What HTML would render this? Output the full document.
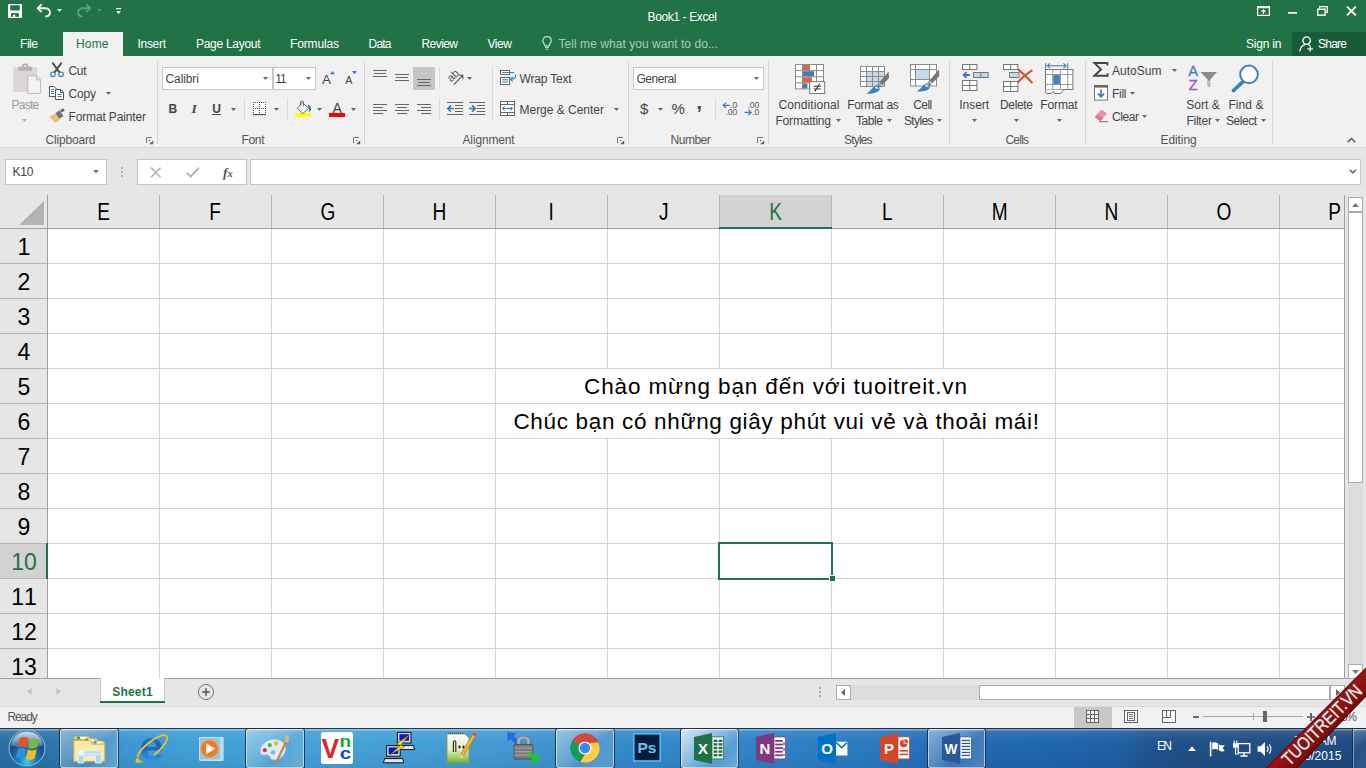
<!DOCTYPE html>
<html lang="en"><head><meta charset="utf-8"><title>Book1 - Excel</title>
<style>
*{box-sizing:border-box;margin:0;padding:0}
html,body{width:1366px;height:768px;overflow:hidden;background:#e6e6e6;font-family:"Liberation Sans",sans-serif;font-size:12px;color:#444}
body{position:relative}
.t{position:absolute;white-space:nowrap;display:block}
.a{position:absolute;display:block}
svg{position:absolute;display:block;overflow:visible}
.box{position:absolute;background:#fff;border:1px solid #c6c6c6}
.sep{position:absolute;width:1px;background:#dadada}
.gs{position:absolute;top:61px;width:1px;height:83px;background:#d4d4d4}

</style></head><body>
<div class="a" style="left:0px;top:0px;width:1366px;height:56px;background:#217346;"></div>
<span class="t" style="left:647.50px;top:9px;font-size:12px;line-height:16px;color:#fff;letter-spacing:-0.378px;">Book1 - Excel</span>
<div class="a" style="left:63px;top:32px;width:60px;height:24px;background:#f1f1f1;"></div>
<span class="t" style="left:20.00px;top:36px;font-size:12px;line-height:16px;color:#fff;letter-spacing:-0.445px;">File</span>
<span class="t" style="left:76.00px;top:36px;font-size:12px;line-height:16px;color:#217346;letter-spacing:0.163px;">Home</span>
<span class="t" style="left:137.50px;top:36px;font-size:12px;line-height:16px;color:#fff;letter-spacing:-0.302px;">Insert</span>
<span class="t" style="left:196.00px;top:36px;font-size:12px;line-height:16px;color:#fff;letter-spacing:-0.289px;">Page Layout</span>
<span class="t" style="left:290.00px;top:36px;font-size:12px;line-height:16px;color:#fff;letter-spacing:-0.144px;">Formulas</span>
<span class="t" style="left:368.50px;top:36px;font-size:12px;line-height:16px;color:#fff;letter-spacing:-0.783px;">Data</span>
<span class="t" style="left:421.50px;top:36px;font-size:12px;line-height:16px;color:#fff;letter-spacing:-0.569px;">Review</span>
<span class="t" style="left:487.50px;top:36px;font-size:12px;line-height:16px;color:#fff;letter-spacing:-0.431px;">View</span>
<span class="t" style="left:558.50px;top:36px;font-size:12px;line-height:16px;color:#a6cdb6;letter-spacing:0.049px;">Tell me what you want to do...</span>
<span class="t" style="left:1246.00px;top:36px;font-size:12px;line-height:16px;color:#fff;letter-spacing:-0.199px;">Sign in</span>
<div class="a" style="left:1292px;top:32px;width:74px;height:24px;background:#185c37;"></div>
<span class="t" style="left:1318.00px;top:36px;font-size:12px;line-height:16px;color:#fff;letter-spacing:-0.755px;">Share</span>
<svg style="left:8px;top:4px" width="14" height="14" viewBox="0 0 14 14"><rect x="0" y="0" width="14" height="14" rx="0.8" fill="#fff"/><path d="M2.2 1.3H11.8V5.6L10.8 6.6H3.2L2.2 5.6Z" fill="#217346"/><rect x="3" y="9.1" width="7.9" height="3.7" fill="#217346"/><rect x="5" y="10.7" width="2.2" height="2.2" fill="#fff"/></svg>
<svg style="left:36px;top:3px" width="16" height="15" viewBox="0 0 16 15"><path d="M5.6 1.4L1.8 5.3L5.6 9.2" fill="none" stroke="#fff" stroke-width="1.9"/><path d="M2.4 5.3H9.2C12.6 5.3 14.6 7.6 13.9 10.4C13.4 12.2 11.8 13.3 9.4 13.6" fill="none" stroke="#fff" stroke-width="1.9"/></svg>
<svg style="left:57px;top:9px" width="5" height="3" viewBox="0 0 5 3"><path d="M0 0H5L2.5 3Z" fill="#fff"/></svg>
<svg style="left:76px;top:3px" width="16" height="15" viewBox="0 0 16 15"><g transform="translate(16,0) scale(-1,1)"><path d="M5.6 1.4L1.8 5.3L5.6 9.2" fill="none" stroke="#5f9f7c" stroke-width="1.9"/><path d="M2.4 5.3H9.2C12.6 5.3 14.6 7.6 13.9 10.4C13.4 12.2 11.8 13.3 9.4 13.6" fill="none" stroke="#5f9f7c" stroke-width="1.9"/></g></svg>
<svg style="left:97px;top:9px" width="5" height="3" viewBox="0 0 5 3"><path d="M0 0H5L2.5 3Z" fill="#4f9470"/></svg>
<svg style="left:116px;top:8px" width="5" height="6" viewBox="0 0 5 6"><rect x="0" y="0" width="5" height="1.3" fill="#fff"/><path d="M0 3H5L2.5 6Z" fill="#fff"/></svg>
<svg style="left:1257px;top:6px" width="13" height="10" viewBox="0 0 13 10"><rect x="0.6" y="0.6" width="11.8" height="8.8" fill="none" stroke="#fff" stroke-width="1.2"/><rect x="0.6" y="0.6" width="11.8" height="1.6" fill="#fff"/><path d="M6.5 8V4M4.5 5.8L6.5 3.8L8.5 5.8" fill="none" stroke="#fff" stroke-width="1.1"/></svg>
<svg style="left:1288px;top:12px" width="9" height="2" viewBox="0 0 9 2"><rect x="0" y="0" width="9" height="1.7" fill="#fff"/></svg>
<svg style="left:1317px;top:6px" width="11" height="10" viewBox="0 0 11 10"><path d="M2.6 2.6V0.7H10.3V6.4H8.2" fill="none" stroke="#fff" stroke-width="1.3"/><rect x="0.7" y="3.2" width="7.4" height="6" fill="none" stroke="#fff" stroke-width="1.4"/></svg>
<svg style="left:1346px;top:6px" width="11" height="10" viewBox="0 0 11 10"><path d="M1 0.6L9.8 9.4M9.8 0.6L1 9.4" fill="none" stroke="#fff" stroke-width="2"/></svg>
<svg style="left:1299px;top:36px" width="16" height="16" viewBox="0 0 16 16"><circle cx="7.6" cy="4.6" r="3.7" fill="none" stroke="#fff" stroke-width="1.3"/><path d="M0.8 15.5C1.3 11.6 3.6 9.3 6 8.6M9.3 8.6C10 8.8 10.6 9.2 11.2 9.7" fill="none" stroke="#fff" stroke-width="1.3"/><path d="M11.2 10.2V15.6M8.5 12.9H13.9" fill="none" stroke="#fff" stroke-width="1.3"/></svg>
<svg style="left:541.5px;top:36px" width="10" height="14" viewBox="0 0 10 14"><path d="M5 0.7C2.4 0.7 0.8 2.6 0.8 4.7C0.8 6.8 2.7 7.6 3 9.8H7C7.3 7.6 9.2 6.8 9.2 4.7C9.2 2.6 7.6 0.7 5 0.7Z" fill="none" stroke="#c4ddd0" stroke-width="1.2"/><path d="M3.2 11.4H6.8M3.8 13.2H6.2" stroke="#c4ddd0" stroke-width="1.1" fill="none"/></svg>
<div class="a" style="left:0px;top:56px;width:1366px;height:91px;background:#f1f1f1;"></div>
<div class="a" style="left:0px;top:147px;width:1366px;height:1px;background:#d6d6d6;"></div>
<div class="gs" style="left:157px"></div>
<div class="gs" style="left:364px"></div>
<div class="gs" style="left:628px"></div>
<div class="gs" style="left:768px"></div>
<div class="gs" style="left:949px"></div>
<div class="gs" style="left:1085px"></div>
<div class="gs" style="left:1272px"></div>
<span class="t" style="left:11.60px;top:97px;font-size:12px;line-height:16px;color:#9c9c9c;letter-spacing:-0.771px;">Paste</span>
<svg style="left:22px;top:119px" width="5" height="3" viewBox="0 0 5 3"><path d="M0 0H5L2.5 3Z" fill="#b0b0b0"/></svg>
<span class="t" style="left:68.50px;top:63px;font-size:12px;line-height:16px;color:#444;letter-spacing:-0.337px;">Cut</span>
<span class="t" style="left:68.50px;top:86px;font-size:12px;line-height:16px;color:#444;letter-spacing:-0.171px;">Copy</span>
<svg style="left:106px;top:92px" width="5" height="3" viewBox="0 0 5 3"><path d="M0 0H5L2.5 3Z" fill="#666"/></svg>
<span class="t" style="left:68.50px;top:109px;font-size:12px;line-height:16px;color:#444;letter-spacing:-0.143px;">Format Painter</span>
<span class="t" style="left:45.50px;top:132px;font-size:12px;line-height:16px;color:#555;letter-spacing:-0.170px;">Clipboard</span>
<svg style="left:146px;top:137px" width="8" height="8" viewBox="0 0 8 8"><path d="M0.5 6V0.5H6" fill="none" stroke="#777" stroke-width="1"/><path d="M7.2 3.2V7.2H3.2Z" fill="#666"/><rect x="3" y="3" width="1.2" height="1.2" fill="#666"/></svg>
<div class="box" style="left:162px;top:67px;width:111px;height:23px"></div>
<div class="box" style="left:273px;top:67px;width:43px;height:23px"></div>
<span class="t" style="left:165.50px;top:71px;font-size:12px;line-height:16px;color:#444;letter-spacing:-0.101px;">Calibri</span>
<span class="t" style="left:275.20px;top:71px;font-size:12px;line-height:16px;color:#444;letter-spacing:-0.957px;">11</span>
<svg style="left:263px;top:77px" width="5" height="3" viewBox="0 0 5 3"><path d="M0 0H5L2.5 3Z" fill="#666"/></svg>
<svg style="left:306px;top:77px" width="5" height="3" viewBox="0 0 5 3"><path d="M0 0H5L2.5 3Z" fill="#666"/></svg>
<span class="t" style="left:168.60px;top:101px;font-size:12px;line-height:16px;color:#444;font-weight:bold;">B</span>
<span class="t" style="left:191.50px;top:100px;font-size:13.5px;line-height:18px;color:#444;font-weight:bold;font-style:italic;font-family:'Liberation Serif',serif;">I</span>
<span class="t" style="left:212.30px;top:101px;font-size:12px;line-height:16px;color:#444;font-weight:bold;">U</span>
<div class="a" style="left:212px;top:114px;width:9px;height:1px;background:#444;"></div>
<svg style="left:231px;top:108px" width="5" height="3" viewBox="0 0 5 3"><path d="M0 0H5L2.5 3Z" fill="#666"/></svg>
<div class="a" style="left:244px;top:98px;width:1px;height:22px;background:#dadada;"></div>
<svg style="left:274px;top:108px" width="5" height="3" viewBox="0 0 5 3"><path d="M0 0H5L2.5 3Z" fill="#666"/></svg>
<div class="a" style="left:287px;top:98px;width:1px;height:22px;background:#dadada;"></div>
<svg style="left:317px;top:108px" width="5" height="3" viewBox="0 0 5 3"><path d="M0 0H5L2.5 3Z" fill="#666"/></svg>
<svg style="left:351px;top:108px" width="5" height="3" viewBox="0 0 5 3"><path d="M0 0H5L2.5 3Z" fill="#666"/></svg>
<span class="t" style="left:241.40px;top:132px;font-size:12px;line-height:16px;color:#555;letter-spacing:-0.271px;">Font</span>
<svg style="left:353px;top:137px" width="8" height="8" viewBox="0 0 8 8"><path d="M0.5 6V0.5H6" fill="none" stroke="#777" stroke-width="1"/><path d="M7.2 3.2V7.2H3.2Z" fill="#666"/><rect x="3" y="3" width="1.2" height="1.2" fill="#666"/></svg>
<div class="a" style="left:413px;top:67px;width:22px;height:23px;background:#c6c6c6;"></div>
<div class="a" style="left:439px;top:67px;width:1px;height:22px;background:#dadada;"></div>
<div class="a" style="left:439px;top:98px;width:1px;height:22px;background:#dadada;"></div>
<div class="a" style="left:492px;top:66px;width:1px;height:55px;background:#dadada;"></div>
<svg style="left:467px;top:77px" width="5" height="3" viewBox="0 0 5 3"><path d="M0 0H5L2.5 3Z" fill="#666"/></svg>
<span class="t" style="left:519.50px;top:71px;font-size:12px;line-height:16px;color:#444;letter-spacing:-0.172px;">Wrap Text</span>
<span class="t" style="left:519.50px;top:102px;font-size:12px;line-height:16px;color:#444;letter-spacing:-0.016px;">Merge &amp; Center</span>
<svg style="left:614px;top:108px" width="5" height="3" viewBox="0 0 5 3"><path d="M0 0H5L2.5 3Z" fill="#666"/></svg>
<span class="t" style="left:462.50px;top:132px;font-size:12px;line-height:16px;color:#555;letter-spacing:-0.145px;">Alignment</span>
<svg style="left:617px;top:137px" width="8" height="8" viewBox="0 0 8 8"><path d="M0.5 6V0.5H6" fill="none" stroke="#777" stroke-width="1"/><path d="M7.2 3.2V7.2H3.2Z" fill="#666"/><rect x="3" y="3" width="1.2" height="1.2" fill="#666"/></svg>
<div class="box" style="left:633px;top:67px;width:131px;height:23px"></div>
<span class="t" style="left:636.40px;top:71px;font-size:12px;line-height:16px;color:#444;letter-spacing:-0.449px;">General</span>
<svg style="left:754px;top:77px" width="5" height="3" viewBox="0 0 5 3"><path d="M0 0H5L2.5 3Z" fill="#666"/></svg>
<span class="t" style="left:640.00px;top:99px;font-size:15px;line-height:20px;color:#444;">$</span>
<svg style="left:658px;top:108px" width="5" height="3" viewBox="0 0 5 3"><path d="M0 0H5L2.5 3Z" fill="#666"/></svg>
<span class="t" style="left:671.50px;top:99px;font-size:15px;line-height:20px;color:#444;">%</span>
<span class="t" style="left:696.50px;top:89px;font-size:20px;line-height:27px;color:#444;font-weight:bold;">,</span>
<div class="a" style="left:715px;top:98px;width:1px;height:22px;background:#dadada;"></div>
<span class="t" style="left:670.50px;top:132px;font-size:12px;line-height:16px;color:#555;letter-spacing:-0.476px;">Number</span>
<svg style="left:757px;top:137px" width="8" height="8" viewBox="0 0 8 8"><path d="M0.5 6V0.5H6" fill="none" stroke="#777" stroke-width="1"/><path d="M7.2 3.2V7.2H3.2Z" fill="#666"/><rect x="3" y="3" width="1.2" height="1.2" fill="#666"/></svg>
<span class="t" style="left:778.50px;top:97px;font-size:12px;line-height:16px;color:#444;letter-spacing:0.096px;">Conditional</span>
<span class="t" style="left:775.50px;top:113px;font-size:12px;line-height:16px;color:#444;letter-spacing:-0.206px;">Formatting</span>
<svg style="left:836px;top:119px" width="5" height="3" viewBox="0 0 5 3"><path d="M0 0H5L2.5 3Z" fill="#666"/></svg>
<span class="t" style="left:847.15px;top:97px;font-size:12px;line-height:16px;color:#444;letter-spacing:-0.289px;">Format as</span>
<span class="t" style="left:856.00px;top:113px;font-size:12px;line-height:16px;color:#444;letter-spacing:-0.422px;">Table</span>
<svg style="left:887px;top:119px" width="5" height="3" viewBox="0 0 5 3"><path d="M0 0H5L2.5 3Z" fill="#666"/></svg>
<span class="t" style="left:913.20px;top:97px;font-size:12px;line-height:16px;color:#444;letter-spacing:-0.557px;">Cell</span>
<span class="t" style="left:904.00px;top:113px;font-size:12px;line-height:16px;color:#444;letter-spacing:-0.636px;">Styles</span>
<svg style="left:936.5px;top:119px" width="5" height="3" viewBox="0 0 5 3"><path d="M0 0H5L2.5 3Z" fill="#666"/></svg>
<span class="t" style="left:844.00px;top:132px;font-size:12px;line-height:16px;color:#555;letter-spacing:-0.816px;">Styles</span>
<span class="t" style="left:959.35px;top:97px;font-size:12px;line-height:16px;color:#444;letter-spacing:-0.062px;">Insert</span>
<svg style="left:971.5px;top:119px" width="5" height="3" viewBox="0 0 5 3"><path d="M0 0H5L2.5 3Z" fill="#666"/></svg>
<span class="t" style="left:1000.00px;top:97px;font-size:12px;line-height:16px;color:#444;letter-spacing:-0.338px;">Delete</span>
<svg style="left:1014px;top:119px" width="5" height="3" viewBox="0 0 5 3"><path d="M0 0H5L2.5 3Z" fill="#666"/></svg>
<span class="t" style="left:1040.30px;top:97px;font-size:12px;line-height:16px;color:#444;letter-spacing:-0.121px;">Format</span>
<svg style="left:1056.5px;top:119px" width="5" height="3" viewBox="0 0 5 3"><path d="M0 0H5L2.5 3Z" fill="#666"/></svg>
<span class="t" style="left:1005.50px;top:132px;font-size:12px;line-height:16px;color:#555;letter-spacing:-0.793px;">Cells</span>
<span class="t" style="left:1112.00px;top:63px;font-size:12px;line-height:16px;color:#444;letter-spacing:0.007px;">AutoSum</span>
<svg style="left:1171.5px;top:69px" width="5" height="3" viewBox="0 0 5 3"><path d="M0 0H5L2.5 3Z" fill="#666"/></svg>
<span class="t" style="left:1112.00px;top:86px;font-size:12px;line-height:16px;color:#444;letter-spacing:-0.276px;">Fill</span>
<svg style="left:1130px;top:92px" width="5" height="3" viewBox="0 0 5 3"><path d="M0 0H5L2.5 3Z" fill="#666"/></svg>
<span class="t" style="left:1112.00px;top:109px;font-size:12px;line-height:16px;color:#444;letter-spacing:-0.419px;">Clear</span>
<svg style="left:1141.5px;top:115px" width="5" height="3" viewBox="0 0 5 3"><path d="M0 0H5L2.5 3Z" fill="#666"/></svg>
<span class="t" style="left:1186.35px;top:97px;font-size:12px;line-height:16px;color:#444;letter-spacing:-0.009px;">Sort &amp;</span>
<span class="t" style="left:1186.40px;top:113px;font-size:12px;line-height:16px;color:#444;letter-spacing:-0.233px;">Filter</span>
<svg style="left:1215px;top:119px" width="5" height="3" viewBox="0 0 5 3"><path d="M0 0H5L2.5 3Z" fill="#666"/></svg>
<span class="t" style="left:1228.40px;top:97px;font-size:12px;line-height:16px;color:#444;letter-spacing:0.104px;">Find &amp;</span>
<span class="t" style="left:1226.00px;top:113px;font-size:12px;line-height:16px;color:#444;letter-spacing:-0.470px;">Select</span>
<svg style="left:1260.5px;top:119px" width="5" height="3" viewBox="0 0 5 3"><path d="M0 0H5L2.5 3Z" fill="#666"/></svg>
<span class="t" style="left:1160.50px;top:132px;font-size:12px;line-height:16px;color:#555;letter-spacing:-0.082px;">Editing</span>
<svg style="left:1347px;top:137px" width="9" height="6" viewBox="0 0 9 6"><path d="M0.7 5.2L4.5 1.4L8.3 5.2" fill="none" stroke="#555" stroke-width="1.4"/></svg>
<svg style="left:12px;top:63px" width="30" height="32" viewBox="0 0 30 32"><rect x="1.2" y="4.2" width="23.8" height="24.6" rx="1" fill="#d9d5d9"/><rect x="6.3" y="3.6" width="13.6" height="4.2" fill="#b3b0b3"/><path d="M10 3.8V2.4C10 1.2 11 0.6 13.1 0.6C15.2 0.6 16.2 1.2 16.2 2.4V3.8Z" fill="#b3b0b3"/><circle cx="13.1" cy="2.9" r="1" fill="#f1f1f1"/><path d="M15.8 12.8H24.6L28.6 16.8V30.4H15.8Z" fill="#f5f1f7" stroke="#bdb9bd" stroke-width="1"/><path d="M24.6 12.8V16.8H28.6" fill="none" stroke="#bdb9bd" stroke-width="1"/></svg>
<svg style="left:49px;top:62px" width="16" height="16" viewBox="0 0 16 16"><path d="M3.4 0.6L10.6 10.6M12.6 0.6L5.4 10.6" stroke="#505050" stroke-width="1.9" fill="none"/><circle cx="3.9" cy="12.3" r="2.3" fill="none" stroke="#3e7cc0" stroke-width="1.1"/><circle cx="12.1" cy="12.3" r="2.3" fill="none" stroke="#3e7cc0" stroke-width="1.1"/></svg>
<svg style="left:49px;top:86px" width="16" height="15" viewBox="0 0 16 15"><path d="M0.5 0.5H5L7.5 3V10.5H0.5Z" fill="#fff" stroke="#555" stroke-width="1"/><path d="M2 3.5H5M2 5.5H5M2 7.5H5" stroke="#3e7cc0" stroke-width="1"/><path d="M6.5 3.5H11.5L14.5 6.5V13.5H6.5Z" fill="#fff" stroke="#555" stroke-width="1"/><path d="M11.5 3.5V6.5H14.5" fill="none" stroke="#555" stroke-width="1"/><path d="M8.5 8.5H12.5M8.5 10.5H12.5" stroke="#3e7cc0" stroke-width="1"/></svg>
<svg style="left:49px;top:108px" width="17" height="16" viewBox="0 0 17 16"><path d="M0.2 8.6L6.6 5.6L11.4 11.2L6.4 15Z" fill="#e9bf78"/><path d="M6.4 5.2L10.4 2.2L14.6 8L10.6 10.8Z" fill="#747474"/><path d="M11 2.2L14.2 0.2L15.8 2.4L12.8 4.6Z" fill="#666"/></svg>
<span class="t" style="left:322px;top:72.3px;font-size:13.4px;line-height:15px;color:#444">A</span>
<svg style="left:330px;top:70.6px" width="5" height="3.2" viewBox="0 0 5 3.2"><path d="M0 3.2H5L2.5 0Z" fill="#3b78bd"/></svg>
<span class="t" style="left:345.2px;top:73.8px;font-size:10.8px;line-height:12px;color:#444">A</span>
<svg style="left:352px;top:70.8px" width="5" height="3.2" viewBox="0 0 5 3.2"><path d="M0 0H5L2.5 3.2Z" fill="#3b78bd"/></svg>
<svg style="left:253px;top:102px" width="13" height="13" viewBox="0 0 13 13"><rect x="0" y="0" width="13" height="12" fill="#fff"/><rect x="0" y="0" width="1" height="1" fill="#555"/><rect x="0" y="6" width="1" height="1" fill="#555"/><rect x="2" y="0" width="1" height="1" fill="#555"/><rect x="2" y="6" width="1" height="1" fill="#555"/><rect x="4" y="0" width="1" height="1" fill="#555"/><rect x="4" y="6" width="1" height="1" fill="#555"/><rect x="6" y="0" width="1" height="1" fill="#555"/><rect x="6" y="6" width="1" height="1" fill="#555"/><rect x="8" y="0" width="1" height="1" fill="#555"/><rect x="8" y="6" width="1" height="1" fill="#555"/><rect x="10" y="0" width="1" height="1" fill="#555"/><rect x="10" y="6" width="1" height="1" fill="#555"/><rect x="12" y="0" width="1" height="1" fill="#555"/><rect x="12" y="6" width="1" height="1" fill="#555"/><rect x="0" y="2" width="1" height="1" fill="#555"/><rect x="0" y="4" width="1" height="1" fill="#555"/><rect x="0" y="8" width="1" height="1" fill="#555"/><rect x="0" y="10" width="1" height="1" fill="#555"/><rect x="6" y="2" width="1" height="1" fill="#555"/><rect x="6" y="4" width="1" height="1" fill="#555"/><rect x="6" y="8" width="1" height="1" fill="#555"/><rect x="6" y="10" width="1" height="1" fill="#555"/><rect x="12" y="2" width="1" height="1" fill="#555"/><rect x="12" y="4" width="1" height="1" fill="#555"/><rect x="12" y="8" width="1" height="1" fill="#555"/><rect x="12" y="10" width="1" height="1" fill="#555"/><rect x="0" y="12" width="13" height="1.2" fill="#555"/></svg>
<div class="a" style="left:295px;top:113px;width:16px;height:4px;background:#ffff00;"></div>
<svg style="left:295px;top:100px" width="17" height="14" viewBox="0 0 17 14"><path d="M7.7 2.6L13.6 8.4L7.7 13.6L2.2 8.4Z" fill="#fff" stroke="#666" stroke-width="1"/><path d="M5.6 5.6V1.9C5.6 0.6 8.4 0.6 8.4 1.9V6.4" fill="none" stroke="#666" stroke-width="1"/><path d="M12.4 4.6C15 5.4 16.4 7.4 16 9.6C15.8 10.8 15 11.8 13.6 12C14.2 10.8 14.4 9.2 14 8.2Z" fill="#2e6db5"/></svg>
<span class="t" style="left:332.4px;top:99.6px;font-size:14.2px;line-height:16px;color:#444">A</span>
<div class="a" style="left:329px;top:113px;width:16px;height:4px;background:#f00;"></div>
<svg style="left:0;top:0" width="500" height="130" viewBox="0 0 500 130"><rect x="373" y="70" width="14" height="1" fill="#666"/><rect x="374" y="73" width="12" height="1" fill="#666"/><rect x="373" y="76" width="14" height="1" fill="#666"/><rect x="395" y="74" width="14" height="1" fill="#666"/><rect x="396" y="77" width="12" height="1" fill="#666"/><rect x="395" y="80" width="14" height="1" fill="#666"/><rect x="417" y="79" width="14" height="1" fill="#666"/><rect x="418" y="82" width="12" height="1" fill="#666"/><rect x="417" y="85" width="14" height="1" fill="#666"/><rect x="373" y="104" width="14" height="1" fill="#666"/><rect x="395" y="104" width="14" height="1" fill="#666"/><rect x="417" y="104" width="14" height="1" fill="#666"/><rect x="373" y="107" width="10" height="1" fill="#666"/><rect x="397" y="107" width="10" height="1" fill="#666"/><rect x="421" y="107" width="10" height="1" fill="#666"/><rect x="373" y="110" width="14" height="1" fill="#666"/><rect x="395" y="110" width="14" height="1" fill="#666"/><rect x="417" y="110" width="14" height="1" fill="#666"/><rect x="373" y="113" width="10" height="1" fill="#666"/><rect x="397" y="113" width="10" height="1" fill="#666"/><rect x="421" y="113" width="10" height="1" fill="#666"/><rect x="447" y="102" width="16" height="1" fill="#666"/><rect x="447" y="114" width="16" height="1" fill="#666"/><rect x="455" y="105" width="8" height="1" fill="#666"/><rect x="455" y="108" width="8" height="1" fill="#666"/><rect x="455" y="111" width="8" height="1" fill="#666"/><rect x="469" y="102" width="16" height="1" fill="#666"/><rect x="469" y="114" width="16" height="1" fill="#666"/><rect x="477" y="105" width="8" height="1" fill="#666"/><rect x="477" y="108" width="8" height="1" fill="#666"/><rect x="477" y="111" width="8" height="1" fill="#666"/><path d="M454 108.5H448.4M451 105.4L447.8 108.5L451 111.6" fill="none" stroke="#3b78bd" stroke-width="1.7"/><path d="M469 108.5H474.6M472 105.4L475.2 108.5L472 111.6" fill="none" stroke="#3b78bd" stroke-width="1.7"/></svg>
<svg style="left:446px;top:68px" width="18" height="18" viewBox="0 0 18 18"><text x="0" y="0" transform="translate(5.2,14.6) rotate(-45)" font-size="11" fill="#555" font-family="Liberation Sans, sans-serif">ab</text><path d="M7.8 16.6L16.4 7.6M12.8 7.2H16.8V11.2" fill="none" stroke="#555" stroke-width="1.1"/></svg>
<svg style="left:500px;top:70px" width="17" height="15" viewBox="0 0 17 15"><rect x="0.5" y="0.5" width="9" height="4" fill="#fff" stroke="#666"/><rect x="0.5" y="7.5" width="9" height="7" fill="#fff" stroke="#666"/><path d="M2 2.5H14" stroke="#3b78bd" stroke-width="1"/><path d="M2.2 9.8H8M2.2 12H8" stroke="#3b78bd" stroke-width="1"/><path d="M15.6 4.6C16 7.6 14.2 9.2 10.8 9.3M12.8 7L10.4 9.3L12.8 11.6" fill="none" stroke="#3b78bd" stroke-width="1.1"/></svg>
<svg style="left:500px;top:101px" width="15" height="15" viewBox="0 0 15 15"><rect x="0.5" y="0.5" width="14" height="14" fill="#fff" stroke="#666"/><path d="M0.5 3.5H14.5M0.5 11.5H14.5M7.5 0.5V3.5M7.5 11.5V14.5" stroke="#666" fill="none"/><path d="M2.6 7.5H12.4M4.4 5.7L2.4 7.5L4.4 9.3M10.6 5.7L12.6 7.5L10.6 9.3" fill="none" stroke="#3b78bd" stroke-width="1"/></svg>
<svg style="left:722px;top:101px" width="16" height="15" viewBox="0 0 16 15"><text x="8" y="7.2" font-family="Liberation Sans, sans-serif" font-size="8.6" fill="#555">.0</text><text x="3.4" y="14.2" font-family="Liberation Sans, sans-serif" font-size="8.6" fill="#555">.00</text><path d="M7.6 4.4H1.6M4 1.8L1.2 4.4L4 7" fill="none" stroke="#3b78bd" stroke-width="1.2"/></svg>
<svg style="left:744px;top:101px" width="16" height="15" viewBox="0 0 16 15"><text x="3.4" y="7.2" font-family="Liberation Sans, sans-serif" font-size="8.6" fill="#555">.00</text><text x="8" y="14.2" font-family="Liberation Sans, sans-serif" font-size="8.6" fill="#555">.0</text><path d="M0.6 11.4H6.8M4.4 8.8L7.2 11.4L4.4 14" fill="none" stroke="#3b78bd" stroke-width="1.2"/></svg>
<svg style="left:795px;top:64px" width="31" height="31" viewBox="0 0 31 31"><rect x="0.5" y="0.5" width="28" height="24.5" fill="#fff"/><path d="M0.5 0.5V25" stroke="#8a8a8a"/><path d="M7.5 0.5V25" stroke="#8a8a8a"/><path d="M14.5 0.5V25" stroke="#8a8a8a"/><path d="M21.5 0.5V25" stroke="#8a8a8a"/><path d="M28.5 0.5V25" stroke="#8a8a8a"/><path d="M0.5 0.5H28.5" stroke="#8a8a8a"/><path d="M0.5 6.6H28.5" stroke="#8a8a8a"/><path d="M0.5 12.7H28.5" stroke="#8a8a8a"/><path d="M0.5 18.799999999999997H28.5" stroke="#8a8a8a"/><path d="M0.5 24.9H28.5" stroke="#8a8a8a"/><rect x="8" y="1" width="6" height="5" fill="#e0603c"/><rect x="8" y="7.2" width="11" height="5" fill="#3d7ebf"/><rect x="8" y="13.3" width="9" height="5" fill="#e0603c"/><rect x="8" y="19.4" width="4.4" height="5" fill="#3d7ebf"/><rect x="14.7" y="17.7" width="15" height="11.8" fill="#fff" stroke="#777"/><path d="M18.6 22.2H25.8M18.6 25H25.8M24.6 19.8L19.8 27.4" stroke="#333" stroke-width="1.1" fill="none"/></svg>
<svg style="left:860px;top:66px" width="32" height="30" viewBox="0 0 32 30"><rect x="0.5" y="0.5" width="24" height="20" fill="#fff"/><rect x="6.5" y="5.5" width="18" height="15" fill="#c5d9ee"/><path d="M0.5 0.5V20.5" stroke="#8a8a8a"/><path d="M6.5 0.5V20.5" stroke="#8a8a8a"/><path d="M12.5 0.5V20.5" stroke="#8a8a8a"/><path d="M18.5 0.5V20.5" stroke="#8a8a8a"/><path d="M24.5 0.5V20.5" stroke="#8a8a8a"/><path d="M0.5 0.5H24.5" stroke="#8a8a8a"/><path d="M0.5 5.5H24.5" stroke="#8a8a8a"/><path d="M0.5 10.5H24.5" stroke="#8a8a8a"/><path d="M0.5 15.5H24.5" stroke="#8a8a8a"/><path d="M0.5 20.5H24.5" stroke="#8a8a8a"/><path d="M28.6 5.6L29 12L22.2 19.2L19.2 16.4Z" fill="#777"/><path d="M18.6 17.2L21.6 20L20.2 21.4L17.2 18.6Z" fill="#8a8a8a"/><path d="M6.4 27.8C11 25 12.4 20.6 16.6 19.2C19 19.6 20.2 21.6 19.6 23.6C18.6 26.4 13.6 28 6.4 27.8Z" fill="#3d7ebf"/><path d="M15.6 20.6C17.2 20.6 18.4 21.6 18.4 23.2C17.4 22.4 16.2 22 14.8 22.2Z" fill="#fff"/></svg>
<svg style="left:910px;top:64px" width="32" height="30" viewBox="0 0 32 30"><rect x="0.5" y="0.5" width="26" height="21.5" fill="#fff" stroke="#8a8a8a"/><path d="M5.5 0.5V22M19.5 0.5V22M0.5 5.5H26.5M0.5 15.5H26.5" stroke="#8a8a8a" fill="none"/><rect x="6" y="6" width="13" height="9" fill="#c5d9ee"/><path d="M29 5.6L29.2 12L22.4 19.2L19.4 16.4Z" fill="#777"/><path d="M18.8 17.2L21.8 20L20.4 21.4L17.4 18.6Z" fill="#8a8a8a"/><path d="M6.6 27.6C11.2 24.8 12.6 20.6 16.8 19.2C19.2 19.6 20.4 21.6 19.8 23.6C18.8 26.4 13.8 27.8 6.6 27.6Z" fill="#3d7ebf"/><path d="M15.8 20.6C17.4 20.6 18.6 21.6 18.6 23.2C17.6 22.4 16.4 22 15 22.2Z" fill="#fff"/></svg>
<svg style="left:962px;top:64px" width="27" height="28" viewBox="0 0 27 28"><rect x="0.5" y="0.5" width="14.4" height="5" fill="#fff" stroke="#777"/><path d="M7.7 0.5V5.5" stroke="#777"/><rect x="11.5" y="8.5" width="14.6" height="5" fill="#c5d9ee" stroke="#777"/><path d="M18.8 8.5V13.5" stroke="#777"/><rect x="0.5" y="16.5" width="14.4" height="10" fill="#fff" stroke="#777"/><path d="M7.7 16.5V26.5M0.5 21.5H14.9" stroke="#777"/><path d="M8 11H2M4.6 8.2L1.6 11L4.6 13.8" fill="none" stroke="#3b78bd" stroke-width="1.8"/></svg>
<svg style="left:1003px;top:64px" width="31" height="29" viewBox="0 0 31 29"><rect x="0.5" y="0.5" width="14.4" height="5" fill="#fff" stroke="#777"/><path d="M7.7 0.5V5.5" stroke="#777"/><rect x="6.5" y="8.5" width="9.5" height="5" fill="#c5d9ee" stroke="#777"/><rect x="0.5" y="17.5" width="14.4" height="10" fill="#fff" stroke="#777"/><path d="M7.7 17.5V27.5M0.5 22.5H14.9" stroke="#777"/><path d="M15.6 5.8C20 9.6 24.6 13.6 28.8 18.4M28.6 6.6C23.6 9.8 19 13.8 15.2 17.8" fill="none" stroke="#d9532c" stroke-width="2.2" stroke-linecap="round"/></svg>
<svg style="left:1045px;top:62px" width="29" height="33" viewBox="0 0 29 33"><path d="M0.6 1.2V6.4M22.8 1.2V6.4M2.6 3.8H20.8M5 1.4L2.4 3.8L5 6.2M18.4 1.4L21 3.8L18.4 6.2" fill="none" stroke="#3b78bd" stroke-width="1.1"/><rect x="0.5" y="7.5" width="27.4" height="20" fill="#fff" stroke="#777"/><path d="M7.7 7.5V27.5M15.4 7.5V27.5M22.7 7.5V27.5M0.5 12.5H27.9M0.5 22.5H27.9" stroke="#999" fill="none"/><rect x="8.2" y="13" width="6.8" height="9" fill="#4a80bd"/><path d="M0.5 27.5V30.2C0.5 31 1 31.5 1.8 31.5H6.6L8.4 29.4L9.4 31.5H15.8L18.6 27.8" fill="#fff" stroke="#777"/></svg>
<svg style="left:1093px;top:62px" width="16" height="15" viewBox="0 0 16 15"><path d="M14.4 3.4V1H1.4L8 7.4L1.4 13.8H14.6V11.2" fill="none" stroke="#444" stroke-width="1.9" stroke-linejoin="miter"/></svg>
<svg style="left:1094px;top:85px" width="14" height="16" viewBox="0 0 14 16"><rect x="0.5" y="0.5" width="13" height="14.6" fill="#fff" stroke="#777"/><rect x="0" y="0" width="14" height="2.6" fill="#666"/><path d="M7 4.6V11.6M3.8 8.6L7 11.8L10.2 8.6" fill="none" stroke="#3b78bd" stroke-width="1.7"/></svg>
<svg style="left:1094px;top:109px" width="15" height="14" viewBox="0 0 15 14"><path d="M7.6 0.4L13 4.6L6.4 12.2L0.8 8Z" fill="#ee8fa3"/><path d="M0.8 8L3.2 5.2L8.8 9.4L6.4 12.2Z" fill="#e8738c"/><path d="M5 12.7H14" stroke="#777" stroke-width="1"/></svg>
<svg style="left:1187px;top:64px" width="32" height="28" viewBox="0 0 32 28"><text x="1.2" y="12.4" font-family="Liberation Sans, sans-serif" font-size="14.6" fill="#3b7fc4" stroke="#3b7fc4" stroke-width=".3">A</text><text x="1.8" y="26.4" font-family="Liberation Sans, sans-serif" font-size="14.6" fill="#a04fc0" stroke="#a04fc0" stroke-width=".3">Z</text><path d="M13.6 8H30L23.2 15.6V22.6H20.6V15.6Z" fill="#8a8a8a"/><path d="M21.4 16.4H22.4V21.8H21.4Z" fill="#f1f1f1"/></svg>
<svg style="left:1230px;top:62px" width="32" height="32" viewBox="0 0 32 32"><path d="M13 19.6L3.4 28.6" stroke="#3b7fc4" stroke-width="3.6" stroke-linecap="round"/><circle cx="19" cy="12.4" r="8.8" fill="#fff" stroke="#3b7fc4" stroke-width="2"/></svg>
<div class="box" style="left:5px;top:159px;width:102px;height:26px"></div>
<span class="t" style="left:12.50px;top:164px;font-size:12px;line-height:16px;color:#444;letter-spacing:-0.176px;">K10</span>
<svg style="left:93px;top:169.5px" width="6" height="3.5" viewBox="0 0 6 3.5"><path d="M0 0H6L3.0 3.5Z" fill="#777"/></svg>
<div class="a" style="left:121px;top:167px;width:2px;height:2px;background:#b4b4b4;"></div>
<div class="a" style="left:121px;top:171px;width:2px;height:2px;background:#b4b4b4;"></div>
<div class="a" style="left:121px;top:175px;width:2px;height:2px;background:#b4b4b4;"></div>
<div class="box" style="left:137px;top:159px;width:110px;height:26px"></div>
<div class="box" style="left:250px;top:159px;width:1111px;height:26px"></div>
<svg style="left:150px;top:167px" width="12" height="11" viewBox="0 0 12 11"><path d="M1 0.6L10.6 10.2M10.6 0.6L1 10.2" stroke="#b4b4b4" stroke-width="1.5" fill="none"/></svg>
<svg style="left:186px;top:167px" width="14" height="11" viewBox="0 0 14 11"><path d="M0.8 5.8L4.6 9.6L12.8 0.8" stroke="#b4b4b4" stroke-width="2" fill="none"/></svg>
<span class="t" style="left:223.00px;top:164px;font-size:13.5px;line-height:18px;color:#555;font-weight:bold;font-style:italic;font-family:'Liberation Serif',serif;">f</span>
<span class="t" style="left:227.60px;top:167px;font-size:10.5px;line-height:14px;color:#555;font-weight:bold;font-style:italic;font-family:'Liberation Serif',serif;">x</span>
<svg style="left:1349px;top:169px" width="8" height="6" viewBox="0 0 8 6"><path d="M0.8 0.8L3.9 3.9L7 0.8" stroke="#666" stroke-width="1.6" fill="none"/></svg>
<div class="a" style="left:0px;top:195px;width:1345px;height:483px;background:#fff;"></div>
<div class="a" style="left:0px;top:195px;width:1345px;height:33px;background:#e6e6e6;"></div>
<div class="a" style="left:0px;top:195px;width:47px;height:483px;background:#e6e6e6;"></div>
<div class="a" style="left:719px;top:195px;width:113px;height:32px;background:#d2d2d2;"></div>
<div class="a" style="left:0px;top:543px;width:47px;height:35px;background:#d2d2d2;"></div>
<div class="a" style="left:159px;top:229px;width:1px;height:449px;background:#d4d4d4;"></div>
<div class="a" style="left:159px;top:195px;width:1px;height:33px;background:#b4b4b4;"></div>
<div class="a" style="left:271px;top:229px;width:1px;height:449px;background:#d4d4d4;"></div>
<div class="a" style="left:271px;top:195px;width:1px;height:33px;background:#b4b4b4;"></div>
<div class="a" style="left:383px;top:229px;width:1px;height:449px;background:#d4d4d4;"></div>
<div class="a" style="left:383px;top:195px;width:1px;height:33px;background:#b4b4b4;"></div>
<div class="a" style="left:495px;top:229px;width:1px;height:449px;background:#d4d4d4;"></div>
<div class="a" style="left:495px;top:195px;width:1px;height:33px;background:#b4b4b4;"></div>
<div class="a" style="left:607px;top:229px;width:1px;height:449px;background:#d4d4d4;"></div>
<div class="a" style="left:607px;top:195px;width:1px;height:33px;background:#b4b4b4;"></div>
<div class="a" style="left:719px;top:229px;width:1px;height:449px;background:#d4d4d4;"></div>
<div class="a" style="left:719px;top:195px;width:1px;height:33px;background:#b4b4b4;"></div>
<div class="a" style="left:831px;top:229px;width:1px;height:449px;background:#d4d4d4;"></div>
<div class="a" style="left:831px;top:195px;width:1px;height:33px;background:#b4b4b4;"></div>
<div class="a" style="left:943px;top:229px;width:1px;height:449px;background:#d4d4d4;"></div>
<div class="a" style="left:943px;top:195px;width:1px;height:33px;background:#b4b4b4;"></div>
<div class="a" style="left:1055px;top:229px;width:1px;height:449px;background:#d4d4d4;"></div>
<div class="a" style="left:1055px;top:195px;width:1px;height:33px;background:#b4b4b4;"></div>
<div class="a" style="left:1167px;top:229px;width:1px;height:449px;background:#d4d4d4;"></div>
<div class="a" style="left:1167px;top:195px;width:1px;height:33px;background:#b4b4b4;"></div>
<div class="a" style="left:1279px;top:229px;width:1px;height:449px;background:#d4d4d4;"></div>
<div class="a" style="left:1279px;top:195px;width:1px;height:33px;background:#b4b4b4;"></div>
<div class="a" style="left:48px;top:263px;width:1297px;height:1px;background:#d4d4d4;"></div>
<div class="a" style="left:0px;top:263px;width:47px;height:1px;background:#b4b4b4;"></div>
<div class="a" style="left:48px;top:298px;width:1297px;height:1px;background:#d4d4d4;"></div>
<div class="a" style="left:0px;top:298px;width:47px;height:1px;background:#b4b4b4;"></div>
<div class="a" style="left:48px;top:333px;width:1297px;height:1px;background:#d4d4d4;"></div>
<div class="a" style="left:0px;top:333px;width:47px;height:1px;background:#b4b4b4;"></div>
<div class="a" style="left:48px;top:368px;width:1297px;height:1px;background:#d4d4d4;"></div>
<div class="a" style="left:0px;top:368px;width:47px;height:1px;background:#b4b4b4;"></div>
<div class="a" style="left:48px;top:403px;width:1297px;height:1px;background:#d4d4d4;"></div>
<div class="a" style="left:0px;top:403px;width:47px;height:1px;background:#b4b4b4;"></div>
<div class="a" style="left:48px;top:438px;width:1297px;height:1px;background:#d4d4d4;"></div>
<div class="a" style="left:0px;top:438px;width:47px;height:1px;background:#b4b4b4;"></div>
<div class="a" style="left:48px;top:473px;width:1297px;height:1px;background:#d4d4d4;"></div>
<div class="a" style="left:0px;top:473px;width:47px;height:1px;background:#b4b4b4;"></div>
<div class="a" style="left:48px;top:508px;width:1297px;height:1px;background:#d4d4d4;"></div>
<div class="a" style="left:0px;top:508px;width:47px;height:1px;background:#b4b4b4;"></div>
<div class="a" style="left:48px;top:543px;width:1297px;height:1px;background:#d4d4d4;"></div>
<div class="a" style="left:0px;top:543px;width:47px;height:1px;background:#b4b4b4;"></div>
<div class="a" style="left:48px;top:578px;width:1297px;height:1px;background:#d4d4d4;"></div>
<div class="a" style="left:0px;top:578px;width:47px;height:1px;background:#b4b4b4;"></div>
<div class="a" style="left:48px;top:613px;width:1297px;height:1px;background:#d4d4d4;"></div>
<div class="a" style="left:0px;top:613px;width:47px;height:1px;background:#b4b4b4;"></div>
<div class="a" style="left:48px;top:648px;width:1297px;height:1px;background:#d4d4d4;"></div>
<div class="a" style="left:0px;top:648px;width:47px;height:1px;background:#b4b4b4;"></div>
<div class="a" style="left:47px;top:195px;width:1px;height:483px;background:#a0a0a0;"></div>
<div class="a" style="left:0px;top:228px;width:1345px;height:1px;background:#a0a0a0;"></div>
<div class="a" style="left:1344px;top:195px;width:1px;height:484px;background:#a0a0a0;"></div>
<div class="a" style="left:719px;top:227px;width:113px;height:2px;background:#217346;"></div>
<div class="a" style="left:46px;top:543px;width:2px;height:36px;background:#217346;"></div>
<svg style="left:18px;top:200px" width="27" height="26" viewBox="0 0 27 26"><path d="M26 1V25H1Z" fill="#b3b3b3"/></svg>
<span class="t" style="left:95.83px;top:197px;font-size:23px;line-height:31px;color:#000;transform:scaleX(0.83);">E</span>
<span class="t" style="left:208.48px;top:197px;font-size:23px;line-height:31px;color:#000;transform:scaleX(0.83);">F</span>
<span class="t" style="left:318.55px;top:197px;font-size:23px;line-height:31px;color:#000;transform:scaleX(0.83);">G</span>
<span class="t" style="left:431.20px;top:197px;font-size:23px;line-height:31px;color:#000;transform:scaleX(0.83);">H</span>
<span class="t" style="left:548.30px;top:197px;font-size:23px;line-height:31px;color:#000;transform:scaleX(0.83);">I</span>
<span class="t" style="left:657.75px;top:197px;font-size:23px;line-height:31px;color:#000;transform:scaleX(0.83);">J</span>
<span class="t" style="left:767.83px;top:197px;font-size:23px;line-height:31px;color:#217346;transform:scaleX(0.83);">K</span>
<span class="t" style="left:881.10px;top:197px;font-size:23px;line-height:31px;color:#000;transform:scaleX(0.83);">L</span>
<span class="t" style="left:989.92px;top:197px;font-size:23px;line-height:31px;color:#000;transform:scaleX(0.83);">M</span>
<span class="t" style="left:1103.20px;top:197px;font-size:23px;line-height:31px;color:#000;transform:scaleX(0.83);">N</span>
<span class="t" style="left:1214.55px;top:197px;font-size:23px;line-height:31px;color:#000;transform:scaleX(0.83);">O</span>
<span class="t" style="left:1326.83px;top:197px;font-size:23px;line-height:31px;color:#000;transform:scaleX(0.83);">P</span>
<span class="t" style="left:17.60px;top:232px;font-size:23px;line-height:31px;color:#000;">1</span>
<span class="t" style="left:17.60px;top:267px;font-size:23px;line-height:31px;color:#000;">2</span>
<span class="t" style="left:17.60px;top:302px;font-size:23px;line-height:31px;color:#000;">3</span>
<span class="t" style="left:17.60px;top:337px;font-size:23px;line-height:31px;color:#000;">4</span>
<span class="t" style="left:17.60px;top:372px;font-size:23px;line-height:31px;color:#000;">5</span>
<span class="t" style="left:17.60px;top:407px;font-size:23px;line-height:31px;color:#000;">6</span>
<span class="t" style="left:17.60px;top:442px;font-size:23px;line-height:31px;color:#000;">7</span>
<span class="t" style="left:17.60px;top:477px;font-size:23px;line-height:31px;color:#000;">8</span>
<span class="t" style="left:17.60px;top:512px;font-size:23px;line-height:31px;color:#000;">9</span>
<span class="t" style="left:11.25px;top:547px;font-size:23px;line-height:31px;color:#217346;letter-spacing:-0.083px;">10</span>
<span class="t" style="left:11.25px;top:582px;font-size:23px;line-height:31px;color:#000;letter-spacing:1.624px;">11</span>
<span class="t" style="left:11.25px;top:617px;font-size:23px;line-height:31px;color:#000;letter-spacing:-0.083px;">12</span>
<span class="t" style="left:11.25px;top:652px;font-size:23px;line-height:31px;color:#000;letter-spacing:-0.083px;">13</span>
<div class="a" style="left:496px;top:369px;width:559px;height:34px;background:#fff;"></div>
<div class="a" style="left:496px;top:404px;width:559px;height:34px;background:#fff;"></div>
<span class="t" style="left:584.00px;top:372px;font-size:22.5px;line-height:30px;color:#000;letter-spacing:0.886px;">Chào mừng bạn đến với tuoitreit.vn</span>
<span class="t" style="left:513.45px;top:407px;font-size:22.5px;line-height:30px;color:#000;letter-spacing:0.668px;">Chúc bạn có những giây phút vui vẻ và thoải mái!</span>
<div class="a" style="left:718px;top:542px;width:115px;height:38px;border:2px solid #217346"></div>
<div class="a" style="left:829px;top:575px;width:6px;height:6px;background:#fff;"></div>
<div class="a" style="left:830px;top:576px;width:5px;height:5px;background:#217346;"></div>
<div class="a" style="left:1345px;top:195px;width:21px;height:483px;background:#e6e6e6;"></div>
<div class="a" style="left:1348px;top:197px;width:15px;height:15px;background:#fff;border:1px solid #ababab"></div>
<svg style="left:1352px;top:202.5px" width="7" height="4" viewBox="0 0 7 4"><path d="M0 4H7L3.5 0Z" fill="#777"/></svg>
<div class="a" style="left:1348px;top:212px;width:15px;height:271px;background:#fff;border:1px solid #ababab"></div>
<div class="a" style="left:1348px;top:483px;width:15px;height:181px;background:#dcdcdc"></div>
<div class="a" style="left:1348px;top:664px;width:15px;height:15px;background:#fff;border:1px solid #ababab"></div>
<svg style="left:1352px;top:670px" width="7" height="4" viewBox="0 0 7 4"><path d="M0 0H7L3.5 4Z" fill="#777"/></svg>
<div class="a" style="left:819px;top:687px;width:2px;height:2px;background:#a6a6a6"></div>
<div class="a" style="left:819px;top:691px;width:2px;height:2px;background:#a6a6a6"></div>
<div class="a" style="left:819px;top:695px;width:2px;height:2px;background:#a6a6a6"></div>
<div class="a" style="left:851px;top:685px;width:128px;height:15px;background:#dcdcdc"></div>
<div class="a" style="left:836px;top:685px;width:15px;height:15px;background:#fff;border:1px solid #ababab"></div>
<svg style="left:841px;top:689px" width="4" height="7" viewBox="0 0 4 7"><path d="M4 0V7L0 3.5Z" fill="#666"/></svg>
<div class="a" style="left:979px;top:685px;width:351px;height:15px;background:#fff;border:1px solid #ababab"></div>
<div class="a" style="left:1330px;top:685px;width:15px;height:15px;background:#fff;border:1px solid #ababab"></div>
<svg style="left:1336px;top:689px" width="4" height="7" viewBox="0 0 4 7"><path d="M0 0V7L4 3.5Z" fill="#666"/></svg>
<svg style="left:27px;top:688px" width="5" height="7" viewBox="0 0 5 7"><path d="M4.6 0V7L0 3.5Z" fill="#c4c4c4"/></svg>
<svg style="left:56px;top:688px" width="5" height="7" viewBox="0 0 5 7"><path d="M0.4 0V7L5 3.5Z" fill="#c4c4c4"/></svg>
<svg style="left:197px;top:683px" width="18" height="18" viewBox="0 0 18 18"><circle cx="9" cy="9" r="7.6" fill="none" stroke="#777" stroke-width="1"/><path d="M9 5.2V12.8M5.2 9H12.8" stroke="#555" stroke-width="1.5"/></svg>
<div class="a" style="left:0px;top:678px;width:1366px;height:1px;background:#a0a0a0;"></div>
<div class="a" style="left:100px;top:678px;width:65px;height:23px;background:#fff;"></div>
<div class="a" style="left:100px;top:678px;width:1px;height:24px;background:#c6c6c6;"></div>
<div class="a" style="left:164px;top:678px;width:1px;height:24px;background:#c6c6c6;"></div>
<div class="a" style="left:100px;top:701px;width:65px;height:2px;background:#217346;"></div>
<span class="t" style="left:112.30px;top:684px;font-size:12px;line-height:16px;color:#217346;letter-spacing:0.190px;font-weight:bold;">Sheet1</span>
<div class="a" style="left:0px;top:706px;width:1366px;height:22px;background:#f1f1f1;"></div>
<div class="a" style="left:0px;top:706px;width:1366px;height:1px;background:#d9d9d9;"></div>
<span class="t" style="left:7.40px;top:709px;font-size:12px;line-height:16px;color:#555;letter-spacing:-1.072px;">Ready</span>
<div class="a" style="left:1074px;top:707px;width:38px;height:21px;background:#c8c8c8"></div>
<svg style="left:1086px;top:710px" width="13" height="13" viewBox="0 0 13 13"><rect x="0.5" y="0.5" width="12" height="12" fill="#f1f1f1" stroke="#666"/><path d="M4.5 0.5V12.5M8.5 0.5V12.5M0.5 4.5H12.5M0.5 8.5H12.5" stroke="#666" fill="none"/></svg>
<svg style="left:1124px;top:710px" width="14" height="13" viewBox="0 0 14 13"><rect x="0.5" y="0.5" width="13" height="12" fill="#f8f8f8" stroke="#666"/><rect x="3.5" y="2.5" width="7" height="8" fill="none" stroke="#666"/><path d="M5 4.5H9M5 6.5H9M5 8.5H9" stroke="#666" stroke-width="0.9"/></svg>
<svg style="left:1162px;top:710px" width="14" height="13" viewBox="0 0 14 13"><rect x="0.5" y="0.5" width="13" height="12" fill="#f8f8f8" stroke="#666"/><path d="M4.5 0.5V7.5M8.5 0.5V7.5H0.5" stroke="#666" fill="none"/></svg>
<div class="a" style="left:1193px;top:716px;width:6px;height:2px;background:#666"></div>
<div class="a" style="left:1203px;top:716px;width:100px;height:1px;background:#a6a6a6"></div>
<div class="a" style="left:1253px;top:713px;width:1px;height:7px;background:#a6a6a6"></div>
<div class="a" style="left:1263px;top:711px;width:4px;height:11px;background:#666"></div>
<svg style="left:1307px;top:712.5px" width="8" height="8" viewBox="0 0 8 8"><path d="M4 0V8M0 4H8" stroke="#555" stroke-width="1.7"/></svg>
<span class="t" style="left:1330.00px;top:709px;font-size:12px;line-height:16px;color:#555;letter-spacing:-1.231px;">175%</span>
<div class="a" style="left:0;top:728px;width:1366px;height:40px;background:linear-gradient(90deg,#2a6fa3 0px,#2c74aa 55px,#3c97d2 125px,#3fa0d6 190px,#44a0d8 350px,#429bd3 490px,#3c92cf 560px,#348aca 620px,#2f83c8 750px,#2a78c0 870px,#2268b4 960px,#1e65ae 1050px,#1e5fa4 1120px,#1f548f 1150px,#1f4f87 1180px,#1e4a80 1366px)"></div>
<div class="a" style="left:0;top:728px;width:1366px;height:40px;background:linear-gradient(180deg,rgba(20,45,70,.9) 0px,rgba(20,45,70,.9) 1px,rgba(255,255,255,.42) 1px,rgba(255,255,255,.42) 2px,rgba(255,255,255,.10) 3px,rgba(255,255,255,.02) 12px,rgba(0,0,0,0) 22px,rgba(0,0,0,.06) 40px)"></div>
<div class="a" style="left:59px;top:728px;width:59.5px;height:41px;border:1px solid rgba(10,30,60,.8);border-radius:3px;background:linear-gradient(135deg,rgba(255,255,255,.42) 0%,rgba(255,255,255,.22) 45%,rgba(255,255,255,.10) 60%,rgba(255,255,255,.22) 100%);box-shadow:inset 0 0 0 1px rgba(255,255,255,.55)"></div>
<div class="a" style="left:245px;top:728px;width:59.5px;height:41px;border:1px solid rgba(10,30,60,.8);border-radius:3px;background:linear-gradient(135deg,rgba(255,255,255,.42) 0%,rgba(255,255,255,.22) 45%,rgba(255,255,255,.10) 60%,rgba(255,255,255,.22) 100%);box-shadow:inset 0 0 0 1px rgba(255,255,255,.55)"></div>
<div class="a" style="left:555px;top:728px;width:59.5px;height:41px;border:1px solid rgba(10,30,60,.8);border-radius:3px;background:linear-gradient(135deg,rgba(255,255,255,.42) 0%,rgba(255,255,255,.22) 45%,rgba(255,255,255,.10) 60%,rgba(255,255,255,.22) 100%);box-shadow:inset 0 0 0 1px rgba(255,255,255,.55)"></div>
<div class="a" style="left:679.5px;top:728px;width:59px;height:41px;border:1px solid rgba(10,30,60,.8);border-radius:3px;background:linear-gradient(135deg,rgba(255,255,255,.78) 0%,rgba(200,225,245,.62) 40%,rgba(120,175,220,.55) 70%,rgba(150,200,235,.6) 100%);box-shadow:inset 0 0 0 1px rgba(255,255,255,.55)"></div>
<div class="a" style="left:927px;top:728px;width:59px;height:41px;border:1px solid rgba(10,30,60,.8);border-radius:3px;background:linear-gradient(135deg,rgba(255,255,255,.42) 0%,rgba(255,255,255,.22) 45%,rgba(255,255,255,.10) 60%,rgba(255,255,255,.22) 100%);box-shadow:inset 0 0 0 1px rgba(255,255,255,.55)"></div>
<svg style="left:8px;top:729px" width="38" height="38" viewBox="0 0 38 38"><defs><radialGradient id="og" cx="50%" cy="88%" r="75%"><stop offset="0" stop-color="#35d0f5"/><stop offset="0.35" stop-color="#1a78b8"/><stop offset="0.75" stop-color="#174f86"/><stop offset="1" stop-color="#2d6ea6"/></radialGradient><linearGradient id="oh" x1="0" y1="0" x2="0" y2="1"><stop offset="0" stop-color="#fff" stop-opacity=".75"/><stop offset="1" stop-color="#fff" stop-opacity=".15"/></linearGradient></defs><circle cx="19" cy="19" r="18" fill="url(#og)" stroke="#8fc0e4" stroke-width="1"/><path d="M3.2 16C4 8 10.6 2.6 19 2.6C27.4 2.6 34 8 34.8 16C29 19.4 9 19.4 3.2 16Z" fill="url(#oh)"/><g transform="translate(19.6,19) scale(1.14) translate(-18,-17.2)"><path d="M11.2 8.6C13.6 7.2 16.2 7 18.8 8.4L17 16.4C14.6 15.2 12 15.4 9.6 16.6Z" fill="#e8531f"/><path d="M20.4 9C23 10.2 25.6 10 28.2 8.6L26.4 16.6C24 18 21.2 18.2 18.6 17Z" fill="#7db83a"/><path d="M9.2 18.2C11.6 17 14.2 16.8 16.6 18L14.8 26C12.4 24.8 9.8 25 7.4 26.4Z" fill="#2f8fe0"/><path d="M18.2 18.6C20.8 19.8 23.6 19.6 26 18.2L24.2 26.4C21.8 27.8 19 28 16.4 26.8Z" fill="#fbbb1c"/></g></svg>
<svg style="left:73px;top:734px" width="33" height="30" viewBox="0 0 33 30"><path d="M1 4.5C1 3 1.8 2.2 3.2 2.2H14.6C15.8 2.2 16.4 2.8 16.8 3.8L17.4 5H1Z" fill="#f3d98a" stroke="#c9a545" stroke-width=".8"/><path d="M8 7C8 5.6 8.8 4.8 10.2 4.8H22.8C24 4.8 24.6 5.4 25 6.4L25.6 7.6H8Z" fill="#f3d98a" stroke="#c9a545" stroke-width=".8"/><path d="M17.6 9C17.6 7.8 18.4 7 19.8 7H29.6C31 7 31.6 7.8 31.6 9V11H17.6Z" fill="#f3d98a" stroke="#c9a545" stroke-width=".8"/><rect x="4" y="2.8" width="9" height="2" fill="#fff"/><rect x="4" y="2.6" width="3" height="2.2" fill="#1aa83a"/><rect x="12" y="5.4" width="9" height="2" fill="#fff"/><rect x="12" y="5.2" width="3" height="2.2" fill="#d9281c"/><rect x="20.6" y="7.6" width="8" height="2" fill="#fff"/><rect x="20.6" y="7.4" width="3" height="2.2" fill="#1e8fe6"/><path d="M0.8 6.4H17.6L19.2 10.2H31.8V27.4H0.8Z" fill="#fbe9a6" stroke="#d1aa48" stroke-width=".9"/><path d="M5 18.6C5 17.4 5.8 16.8 7 16.8H26.2C27.4 16.8 28.2 17.4 28.2 18.6V29H22.4V22.4H10.8V29H5Z" fill="#a9d8f2" stroke="#e9f6fd" stroke-width=".9" fill-opacity=".92"/><path d="M5.4 18.8H27.8V21.4H5.4Z" fill="#d7eefb" fill-opacity=".8"/><circle cx="8.2" cy="18.8" r="2.6" fill="#fff" fill-opacity=".9"/></svg>
<svg style="left:133px;top:731px" width="40" height="36" viewBox="0 0 40 36"><defs><linearGradient id="ie" x1="0" y1="0" x2="0" y2="1"><stop offset="0" stop-color="#3a9af0"/><stop offset="0.5" stop-color="#1b5fc0"/><stop offset="1" stop-color="#38b3ef"/></linearGradient></defs><path d="M3.4 27.6C0.4 32.6 5 33.4 11.4 29.8C8 30.4 5.2 29.8 5.6 26.4Z" fill="#f2c11e"/><text x="6.6" y="29.6" font-family="Liberation Sans, sans-serif" font-weight="bold" font-size="43" fill="url(#ie)">e</text><ellipse cx="19" cy="17.4" rx="19" ry="6.4" transform="rotate(-40 19 17.4)" fill="none" stroke="#f2c11e" stroke-width="1.8" stroke-dasharray="52 22" stroke-dashoffset="-46"/></svg>
<svg style="left:199px;top:737px" width="28" height="25" viewBox="0 0 28 25"><rect x="2.6" y="0.8" width="21.6" height="22.6" fill="#9ccbe9" stroke="#c3e0f3" stroke-width=".8"/><rect x="1.4" y="0.4" width="21.6" height="22.6" fill="#acd5ee" stroke="#cfe7f6" stroke-width=".8"/><rect x="0.4" y="0.4" width="21.4" height="22.6" fill="#8fc6e8" stroke="#d3e9f7" stroke-width=".8"/><circle cx="10.4" cy="11.8" r="8.9" fill="#f47a1a"/><circle cx="10.4" cy="11.8" r="8.9" fill="none" stroke="#f9a65a" stroke-width=".8"/><path d="M7.2 6.2L16.2 11.8L7.2 17.4Z" fill="#fff"/></svg>
<svg style="left:258px;top:733px" width="34" height="32" viewBox="0 0 34 32"><path d="M2.4 19.6C1.2 12.8 8 6.4 16.4 6.4C23.6 6.4 28.4 10.6 27.6 16.6C26.8 22.8 20.8 27.4 15.4 26.8C11.4 26.4 12.6 22.6 9.8 21.8C7.4 21.2 3.2 23.4 2.4 19.6Z" fill="#dcecf8" stroke="#a9c9e4" stroke-width=".8"/><circle cx="6.8" cy="17.2" r="2.1" fill="#e5362c"/><circle cx="11.8" cy="12.2" r="2.1" fill="#4fb83c"/><circle cx="18.2" cy="10.4" r="2.1" fill="#f5b51c"/><circle cx="15" cy="19.4" r="2.2" fill="#7fb2e0"/><path d="M27.2 8.6L28.8 9.4L18.6 30.2L17.4 29.6Z" fill="#e8862a" stroke="#c96a1a" stroke-width=".5"/><path d="M26.4 8.8C26 5.6 27.4 2.8 30 1.2C31.4 3.4 31.6 6.6 29.6 10Z" fill="#e2b27c"/></svg>
<svg style="left:321px;top:732px" width="32" height="32" viewBox="0 0 32 32"><rect x="0" y="0" width="32" height="32" rx="2.5" fill="#fff"/><text x="0.6" y="26" font-family="Liberation Sans, sans-serif" font-weight="bold" font-size="27" fill="#e8202a" textLength="17.6" lengthAdjust="spacingAndGlyphs">V</text><text x="18.6" y="15" font-family="Liberation Sans, sans-serif" font-weight="bold" font-size="17" fill="#12a53c" textLength="11.6" lengthAdjust="spacingAndGlyphs">n</text><text x="18.8" y="27.4" font-family="Liberation Sans, sans-serif" font-weight="bold" font-size="17" fill="#1a3fd6" textLength="11.4" lengthAdjust="spacingAndGlyphs">c</text></svg>
<svg style="left:383px;top:731px" width="33" height="33" viewBox="0 0 33 33"><rect x="14.4" y="1.4" width="13.6" height="10.6" fill="#d9d9d9" stroke="#111" stroke-width="1"/><rect x="16.4" y="3.2" width="9.6" height="6.6" fill="#1414c8"/><path d="M12.4 14.4H30.4L31.6 18.6H11.2Z" fill="#e4e4e4" stroke="#111" stroke-width="1"/><rect x="3.6" y="14.6" width="13.6" height="10.6" fill="#d9d9d9" stroke="#111" stroke-width="1"/><rect x="5.6" y="16.4" width="9.6" height="6.6" fill="#1414c8"/><path d="M1.6 27.6H19.6L20.8 31.8H0.4Z" fill="#e4e4e4" stroke="#111" stroke-width="1"/><path d="M26.4 3.6L13.6 13.2L17.6 14.6L6.6 24L21.6 15.6L17.6 14.2Z" fill="#ffe81a" stroke="#6a5a00" stroke-width=".6"/></svg>
<svg style="left:446px;top:731px" width="32" height="33" viewBox="0 0 32 33"><defs><linearGradient id="np" x1="0" y1="0" x2="0" y2="1"><stop offset="0" stop-color="#fdfdf6"/><stop offset="0.55" stop-color="#dfeec0"/><stop offset="1" stop-color="#6cb52a"/></linearGradient></defs><path d="M1 3H19L23 7V32H1Z" fill="url(#np)" stroke="#8a8a6a" stroke-width=".8"/><path d="M2 2.2H18" stroke="#555" stroke-width="1.6" stroke-dasharray="1 1"/><path d="M7.4 21V11C7.4 9.4 9.8 9.4 9.8 11V21" fill="none" stroke="#222" stroke-width="1.1"/><path d="M12 16H15M13.5 14.5V17.5M16 16H19M17.5 14.5V17.5" stroke="#222" stroke-width="1"/><path d="M26.6 3.4L29.6 5.2L17.8 25L14.8 23.2Z" fill="#f2b632" stroke="#9a6a12" stroke-width=".6"/><path d="M14.8 23.2L17.8 25L14.2 28Z" fill="#e8d2a6"/><path d="M26.6 3.4L27.6 1.6L30.6 3.4L29.6 5.2Z" fill="#d94a4a"/></svg>
<svg style="left:506px;top:731px" width="34" height="33" viewBox="0 0 34 33"><path d="M1 1L10.4 2.2L7.6 5L12.6 10L9.6 13L4.6 8L1.8 10.6Z" fill="#1c6ee8"/><path d="M11 13.6V9.4C11 3.8 24 3.8 24 9.4V13.6H20.8V9.8C20.8 7 14.2 7 14.2 9.8V13.6Z" fill="#b8b8b8" stroke="#6a6a6a" stroke-width=".7"/><rect x="8" y="13.4" width="19" height="14.6" rx="1.2" fill="#7a7a7a" stroke="#444" stroke-width=".8"/><path d="M8.6 17H26.4M8.6 20.6H26.4M8.6 24.2H26.4" stroke="#a4a4a4" stroke-width="1.2"/><path d="M33 32L23.6 30.8L26.4 28L21.4 23L24.4 20L29.4 25L32.2 22.4Z" fill="#1fc62a"/></svg>
<svg style="left:570px;top:733px" width="30" height="30" viewBox="0 0 30 30"><circle cx="15" cy="15" r="14.4" fill="#db4437"/><path d="M15 15L2.6 7.6A14.4 14.4 0 0 0 11 28.8L15 15Z" fill="#0f9d58"/><path d="M15 15L2.4 7.9A14.4 14.4 0 0 0 9.2 28.2L17 22Z" fill="#0f9d58"/><path d="M28.2 9.2A14.4 14.4 0 0 1 10.4 28.7L17.4 17.2L21 9.2Z" fill="#ffcd40"/><path d="M2.5 7.8A14.4 14.4 0 0 1 28.3 9.4H15Z" fill="#db4437"/><circle cx="15" cy="15" r="6.6" fill="#f1f1f1"/><circle cx="15" cy="15" r="5.2" fill="#4285f4"/></svg>
<svg style="left:633px;top:732.5px" width="28" height="29" viewBox="0 0 28 29"><rect x="0.8" y="0.8" width="26.4" height="27.2" fill="#0a1a3c" stroke="#3cc4f2" stroke-width="1.6"/><text x="4.4" y="20.4" font-family="Liberation Sans, sans-serif" font-weight="bold" font-size="15.5" fill="#5ccaf5" textLength="19" lengthAdjust="spacingAndGlyphs">Ps</text></svg>
<svg style="left:694px;top:732.5px" width="32" height="31" viewBox="0 0 32 31"><path d="M0 3.9L18 0V30.7L0 27Z" fill="#1e7145"/><text x="9" y="21" text-anchor="middle" font-family="Liberation Sans, sans-serif" font-weight="bold" font-size="15" fill="#fff">X</text><rect x="18" y="3.9" width="11.6" height="22" fill="#fff" stroke="#1e7145" stroke-width=".8"/><rect x="19.6" y="6.6" width="3.8" height="2.4" fill="#1e7145"/><rect x="24.6" y="6.6" width="3.8" height="2.4" fill="#1e7145"/><rect x="19.6" y="10.2" width="3.8" height="2.4" fill="#1e7145"/><rect x="24.6" y="10.2" width="3.8" height="2.4" fill="#1e7145"/><rect x="19.6" y="13.8" width="3.8" height="2.4" fill="#1e7145"/><rect x="24.6" y="13.8" width="3.8" height="2.4" fill="#1e7145"/><rect x="19.6" y="17.4" width="3.8" height="2.4" fill="#1e7145"/><rect x="24.6" y="17.4" width="3.8" height="2.4" fill="#1e7145"/><rect x="19.6" y="21" width="3.8" height="2.4" fill="#1e7145"/><rect x="24.6" y="21" width="3.8" height="2.4" fill="#1e7145"/></svg>
<svg style="left:756.2px;top:732.5px" width="32" height="31" viewBox="0 0 32 31"><path d="M0 3.9L18 0V30.7L0 27Z" fill="#80397b"/><text x="9" y="21" text-anchor="middle" font-family="Liberation Sans, sans-serif" font-weight="bold" font-size="15" fill="#fff">N</text><path d="M18 3.9H27.6C28.8 3.9 29.6 4.6 29.6 5.8V24C29.6 25.2 28.8 25.9 27.6 25.9H18Z" fill="#fff" stroke="#80397b" stroke-width=".8"/><rect x="19.2" y="7" width="7.6" height="1.8" fill="#80397b"/><rect x="19.2" y="10.6" width="7.6" height="1.8" fill="#80397b"/><rect x="19.2" y="14.2" width="7.6" height="1.8" fill="#80397b"/><rect x="19.2" y="17.8" width="7.6" height="1.8" fill="#80397b"/><rect x="19.2" y="21.4" width="7.6" height="1.8" fill="#80397b"/><path d="M28 9V12M28 15V18M28 21V23" stroke="#80397b" stroke-width="1.2"/></svg>
<svg style="left:818px;top:732.5px" width="32" height="31" viewBox="0 0 32 31"><path d="M0 3.9L18 0V30.7L0 27Z" fill="#0072c6"/><text x="9" y="21" text-anchor="middle" font-family="Liberation Sans, sans-serif" font-weight="bold" font-size="15" fill="#fff">O</text><rect x="18" y="8.7" width="11.4" height="13.8" fill="#fff"/><path d="M18.4 9.6L23.7 14.8L29 9.6" fill="none" stroke="#0072c6" stroke-width="1.5"/></svg>
<svg style="left:880px;top:732.5px" width="32" height="31" viewBox="0 0 32 31"><path d="M0 3.9L18 0V30.7L0 27Z" fill="#d24726"/><text x="9" y="21" text-anchor="middle" font-family="Liberation Sans, sans-serif" font-weight="bold" font-size="15" fill="#fff">P</text><rect x="18" y="3.9" width="11.6" height="22" fill="#fff" stroke="#d24726" stroke-width=".8"/><circle cx="23.6" cy="10.6" r="3.8" fill="#d24726"/><path d="M23.6 10.6V6.8A3.8 3.8 0 0 1 27.4 10.6Z" fill="#fff"/><path d="M24.4 9.8V6A3.8 3.8 0 0 1 28.2 9.8Z" fill="#d24726"/><rect x="19.6" y="17" width="8.4" height="1.6" fill="#d24726"/><rect x="19.6" y="20.6" width="8.4" height="1.6" fill="#d24726"/></svg>
<svg style="left:942px;top:732.5px" width="32" height="31" viewBox="0 0 32 31"><path d="M0 3.9L18 0V30.7L0 27Z" fill="#2b579a"/><text x="9" y="21" text-anchor="middle" font-family="Liberation Sans, sans-serif" font-weight="bold" font-size="15" fill="#fff" textLength="13" lengthAdjust="spacingAndGlyphs">W</text><rect x="18" y="3.9" width="11.6" height="22" fill="#fff" stroke="#2b579a" stroke-width=".8"/><rect x="19.6" y="6.8" width="8.4" height="1.3" fill="#2b579a"/><rect x="19.6" y="9.8" width="8.4" height="1.3" fill="#2b579a"/><rect x="19.6" y="12.8" width="8.4" height="1.3" fill="#2b579a"/><rect x="19.6" y="15.8" width="8.4" height="1.3" fill="#2b579a"/><rect x="19.6" y="18.8" width="8.4" height="1.3" fill="#2b579a"/><rect x="19.6" y="21.8" width="8.4" height="1.3" fill="#2b579a"/></svg>
<span class="t" style="left:1157.00px;top:738px;font-size:12px;line-height:16px;color:#fff;letter-spacing:-1.670px;">EN</span>
<svg style="left:1188px;top:746px" width="8" height="5" viewBox="0 0 8 5"><path d="M0 5H8L4 0.4Z" fill="#fff"/></svg>
<svg style="left:1209px;top:741px" width="17" height="16" viewBox="0 0 17 16"><path d="M1.6 0.8V15.4" stroke="#fff" stroke-width="1.6"/><path d="M3.2 2C5.4 0.8 7.4 1.4 9.2 2.4V9C7.4 8 5.4 7.6 3.2 8.8Z" fill="#fff"/><path d="M10 3.6C12 4.6 13.8 4.6 15.8 3.8L13.8 7L15.6 10C13.6 10.8 11.8 10.6 10 9.6Z" fill="#fff"/></svg>
<svg style="left:1232px;top:740px" width="19" height="18" viewBox="0 0 19 18"><rect x="6.2" y="3.6" width="11.6" height="9.2" fill="#1d4b82" stroke="#fff" stroke-width="1.3"/><path d="M12 12.8V15.4M8.4 16H15.6" stroke="#fff" stroke-width="1.4"/><path d="M2.2 0.6V3.4M4.8 0.6V3.4" stroke="#fff" stroke-width="1.1"/><rect x="1" y="3.2" width="5" height="4.4" fill="#fff"/><path d="M3.5 7.6V14H7" fill="none" stroke="#fff" stroke-width="1.2"/></svg>
<svg style="left:1257px;top:741px" width="16" height="16" viewBox="0 0 16 16"><path d="M0.6 5.2H3.6L8 1V15L3.6 10.8H0.6Z" fill="#fff"/><path d="M10 5.2C11.2 6.8 11.2 9.2 10 10.8M12.2 3.4C14.4 6 14.4 10 12.2 12.6" fill="none" stroke="#fff" stroke-width="1.1"/></svg>
<span class="t" style="left:1294.50px;top:733px;font-size:12px;line-height:16px;color:#fff;letter-spacing:-0.338px;">7:30 AM</span>
<span class="t" style="left:1287.50px;top:748px;font-size:12px;line-height:16px;color:#fff;letter-spacing:0.077px;">9/25/2015</span>
<div class="a" style="left:1352px;top:729px;width:15px;height:39px;border-left:1px solid rgba(10,30,60,.7);background:linear-gradient(135deg,rgba(255,255,255,.22),rgba(255,255,255,.04) 50%,rgba(255,255,255,.1));box-shadow:inset 1px 0 0 rgba(255,255,255,.4),inset 0 1px 0 rgba(255,255,255,.35),inset -1px 0 0 rgba(255,255,255,.3)"></div>
<svg style="left:1240px;top:650px" width="126" height="118" viewBox="0 0 126 118"><defs><linearGradient id="wm" gradientUnits="userSpaceOnUse" x1="76" y1="68" x2="91" y2="83"><stop offset="0" stop-color="#9a1717"/><stop offset="0.5" stop-color="#8b1111"/><stop offset="1" stop-color="#7a0c0c"/></linearGradient></defs><path d="M25.5 118L126 17.5V46.5L57.5 118Z" fill="url(#wm)"/><path d="M25.5 118L126 17.5V19.2L27.2 118Z" fill="#6e0d0d"/><path d="M55.8 118L126 44.8V46.5L57.5 118Z" fill="#5e0a0a"/><text transform="translate(49.2,116.4) rotate(-45)" x="0" y="0" font-family="Liberation Sans, sans-serif" font-size="18" fill="#e2f4f3" textLength="105" lengthAdjust="spacingAndGlyphs" stroke="#e2f4f3" stroke-width=".3">TUOITREIT.VN</text></svg>
</body></html>
